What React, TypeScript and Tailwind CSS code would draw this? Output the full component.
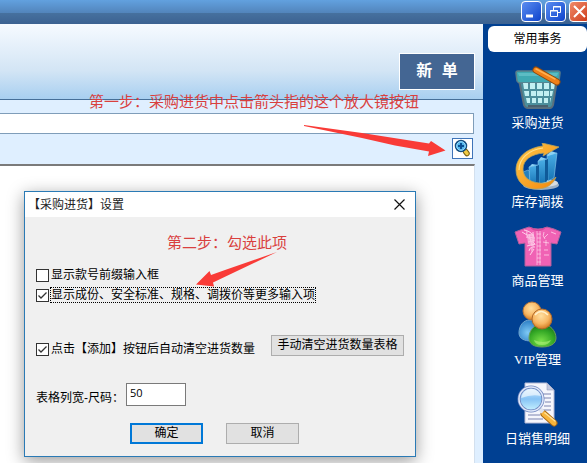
import { useState } from 'react'
import type { ReactNode } from 'react'

type NavItem = {
  label: string
  icon: ReactNode
}

type CheckOptionProps = {
  id: string
  label: string
  checked: boolean
  focused?: boolean
  onChange: (checked: boolean) => void
}

function BasketIcon() {
  return (
    <svg viewBox="0 0 48 48" className="size-12" aria-hidden="true">
      <path d="M5 16h38l-4 25q-1 3-3 3H14q-3 0-4-3Z" fill="#4c8f9c" stroke="#5a6f7c" strokeWidth="2" />
      <path d="M2 9q0-2 2-2h40q2 0 2 2l-1 8q-1 2-3 2H6q-2 0-3-2Z" fill="#3fa9b2" stroke="#5b7d8a" strokeWidth="1.5" />
      <path d="M4 9h40l-1 3H5Z" fill="#5cbcc4" />
      <g fill="#c3f0f2">
        <path d="M9 19h5v6h-4zM16 19h5v6h-5zM23 19h5v6h-5zM30 19h5v6h-5zM37 19h4l-1 6h-3z" />
        <path d="M10 27h5v5h-4zM17 27h5v5h-5zM23 27h6v5h-6zM30 27h5v5h-5zM36 27h3l-1 5h-2z" />
        <path d="M12 34h4v5h-3zM18 34h4v5h-4zM24 34h4v5h-4zM30 34h4v5h-4zM36 34h1l-1 5z" />
      </g>
      <path d="M14 42h20" stroke="#48616e" strokeWidth="2" />
      <path d="M22 6 43 18" stroke="#8a4a12" strokeWidth="7" strokeLinecap="round" />
      <path d="M22 6 43 18" stroke="#f08018" strokeWidth="5" strokeLinecap="round" />
      <path d="M22 5 41 15" stroke="#ffb050" strokeWidth="1.5" strokeLinecap="round" />
    </svg>
  )
}

function ChartIcon() {
  return (
    <svg viewBox="0 0 48 48" className="size-12" aria-hidden="true">
      <defs>
        <linearGradient id="swoosh" x1="0" y1="0" x2="1" y2="1">
          <stop offset="0" stopColor="#ffc94a" />
          <stop offset="1" stopColor="#f2860c" />
        </linearGradient>
        <linearGradient id="bar" x1="0" y1="0" x2="0" y2="1">
          <stop offset="0" stopColor="#4aaee6" />
          <stop offset="1" stopColor="#1673b4" />
        </linearGradient>
      </defs>
      <ellipse cx="27" cy="42" rx="18" ry="5" fill="#9db0c6" />
      <ellipse cx="29" cy="40" rx="15" ry="4" fill="#d8dde2" />
      <path d="M9 29l5-2 4 4v10l-5-2Z" fill="#2680bd" stroke="#7fc0e8" strokeWidth=".6" />
      <path d="M15 24l9-2v19l-8 1Z" fill="url(#bar)" stroke="#8fcdf0" strokeWidth=".6" />
      <path d="M24 18l9-2v23l-8 2Z" fill="url(#bar)" stroke="#8fcdf0" strokeWidth=".6" />
      <path d="M33 12l10-2-3 25-6 3Z" fill="url(#bar)" stroke="#8fcdf0" strokeWidth=".6" />
      <path d="M22 23v18l3-1V22ZM31 17v22l3-2V16Z" fill="#0f5a99" />
      <path d="M33 12l4-4 6 2-9 3ZM24 18l3-4 6 2ZM15 24l3-3 6 1Z" fill="#8bd2f5" />
      <path
        d="M45 4 28 0l1 3C12 5 2 15 2 27c0 11 8 19 20 19 10 0 17-4 20-12-5 5-11 7-17 6C15 39 9 34 9 26c0-9 8-15 21-16l-1 3Z"
        fill="url(#swoosh)"
        stroke="#b7a35c"
        strokeWidth=".8"
      />
      <path d="M29 5C14 7 5 16 5 27" fill="none" stroke="#ffe08a" strokeWidth="1.2" />
    </svg>
  )
}

function ShirtIcon() {
  return (
    <svg viewBox="0 0 48 48" className="size-12" aria-hidden="true">
      <path
        d="M15 5q9 4 18 0l7 2 7 3-4 12-6-1v23H11V21l-6 1L1 10l8-3Z"
        fill="#f062b4"
        stroke="#b0609c"
        strokeWidth="1"
      />
      <path d="M16 5q8 5 16 0-2 4-8 4t-8-4Z" fill="#d94b9e" />
      <g fill="none" stroke="#ffd0ea" strokeWidth="1">
        <path d="M10 8q7 1 10 7M8 10l5 3 7 0M13 9q-2 8 8 10M12 15l9 1M14 20q6-2 7 3M13 24l8-2M15 29q1-5 6-4M16 33l4-6M15 12l3 12M19 10v14" />
        <path d="M23 9v34M26 9v34M23 12h4M23 16h4M23 20h4M23 24h4M23 28h4M23 32h4M23 36h4M23 40h4" strokeWidth=".7" />
        <path d="M30 10q-2 4 1 7M34 12l-4 4M29 20l6 1M32 18v6M37 10l5 2M30 28h4M30 33h5" strokeWidth=".8" />
      </g>
      <path d="M13 14l5-3 3 6-3 7-4-2ZM16 26l4-2-2 7Z" fill="#fbb9de" opacity=".7" />
    </svg>
  )
}

function PeopleIcon() {
  return (
    <svg viewBox="0 0 48 48" className="size-12" aria-hidden="true">
      <defs>
        <radialGradient id="head" cx=".45" cy=".35" r=".65">
          <stop offset="0" stopColor="#ffdfa0" />
          <stop offset=".6" stopColor="#f8b763" />
          <stop offset="1" stopColor="#d27a22" />
        </radialGradient>
        <radialGradient id="green" cx=".45" cy=".75" r=".75">
          <stop offset="0" stopColor="#7be04a" />
          <stop offset=".6" stopColor="#35a926" />
          <stop offset="1" stopColor="#16751a" />
        </radialGradient>
        <radialGradient id="blue" cx=".4" cy=".6" r=".7">
          <stop offset="0" stopColor="#7fcaf5" />
          <stop offset="1" stopColor="#1c70bd" />
        </radialGradient>
      </defs>
      <path d="M16 19c7 0 11 6 11 13 0 5-4 8-10 8S5 38 5 32c0-7 4-13 11-13Z" fill="url(#blue)" stroke="#73a7cf" strokeWidth="1" />
      <circle cx="18" cy="10" r="9" fill="url(#head)" stroke="#b9783a" strokeWidth="1" />
      <path d="M28 23c8 0 14 7 14 14 0 6-6 9-14 9s-13-3-13-9c0-7 5-14 13-14Z" fill="url(#green)" stroke="#6d9d58" strokeWidth="1" />
      <path d="M20 39q9 4 17 0-2 5-9 5t-8-5Z" fill="#b2f27c" opacity=".6" />
      <circle cx="28" cy="18" r="10" fill="url(#head)" stroke="#b0692b" strokeWidth="1" />
      <path d="M21 14q6-7 13 0" fill="none" stroke="#fff0cb" strokeWidth="1.5" />
    </svg>
  )
}

function ReportIcon() {
  return (
    <svg viewBox="0 0 48 48" className="size-12" aria-hidden="true">
      <defs>
        <linearGradient id="lens" x1="0" y1="0" x2="0" y2="1">
          <stop offset="0" stopColor="#d9eeff" />
          <stop offset=".5" stopColor="#86c3f5" />
          <stop offset="1" stopColor="#c9f3ff" />
        </linearGradient>
      </defs>
      <path d="M11 3h22l7 7v33H11Z" fill="#f5f6fc" stroke="#b5bad6" strokeWidth="1" />
      <path d="M33 3v7h7Z" fill="#c4c9df" stroke="#9aa1c0" strokeWidth=".6" />
      <path d="M29 14h8M30 18h7M31 22h6M30 26h7M29 30h8M14 35h12M14 39h15" stroke="#a4abc9" strokeWidth="1.5" />
      <path d="M30 34 40 43" stroke="#a86a18" strokeWidth="7" strokeLinecap="round" />
      <path d="M30 34 40 43" stroke="#f8b53c" strokeWidth="5" strokeLinecap="round" />
      <path d="M31 33 41 41" stroke="#ffe39a" strokeWidth="1.5" strokeLinecap="round" />
      <path d="M25 28l4 4" stroke="#dde2ee" strokeWidth="4" />
      <circle cx="17" cy="19" r="12" fill="url(#lens)" stroke="#6f86bf" strokeWidth="3" />
      <circle cx="17" cy="19" r="12" fill="none" stroke="#dfe8fa" strokeWidth="1.5" />
      <path d="M7 18q2-9 11-9 7 1 9 7-9-2-20 2Z" fill="#fff" opacity=".6" />
    </svg>
  )
}

function ZoomInIcon() {
  return (
    <svg viewBox="0 0 19 19" className="size-[19px]" aria-hidden="true">
      <path d="M12.500 12.500l1.500 2" stroke="#7b6210" strokeWidth="5.500" strokeLinecap="round" />
      <path d="M12.500 12.500l1.500 2" stroke="#f2cc45" strokeWidth="3.500" strokeLinecap="round" />
      <circle cx="8" cy="7" r="5.500" fill="#4fb4ea" stroke="#164f80" strokeWidth="1.5" />
      <circle cx="8" cy="7" r="4.300" fill="none" stroke="#9bdcff" strokeWidth="1" />
      <path d="M8 4v6M5 7h6" stroke="#0b5194" strokeWidth="2" />
    </svg>
  )
}

const NAV_ITEMS: NavItem[] = [
  { label: '采购进货', icon: <BasketIcon /> },
  { label: '库存调拨', icon: <ChartIcon /> },
  { label: '商品管理', icon: <ShirtIcon /> },
  { label: 'VIP管理', icon: <PeopleIcon /> },
  { label: '日销售明细', icon: <ReportIcon /> },
]

function TitleBar() {
  return (
    <header className="h-6 shrink-0 bg-[linear-gradient(to_bottom,#62a1df_0px,#5284bb_13px,#46719f_13px,#3c6191_24px)]">
      <div className="-mr-[3px] flex justify-end gap-[3px] pt-px">
        <button type="button" aria-label="最小化" className="size-[21px] rounded-sm border border-white bg-linear-to-br from-[#5c8df0] to-[#0c41cc]">
          <svg viewBox="0 0 19 19" className="size-[19px]"><path d="M4 14h7" stroke="#fff" strokeWidth="3" /></svg>
        </button>
        <button type="button" aria-label="还原" className="size-[21px] rounded-sm border border-white bg-linear-to-br from-[#5c8df0] to-[#0c41cc]">
          <svg viewBox="0 0 19 19" className="size-[19px]" fill="none" stroke="#fff"><path d="M7.500 8V4.500h7v6H12M7 5h8" /><path d="M4.500 8.500h7v6h-7zM4 9h8" /></svg>
        </button>
        <button type="button" aria-label="关闭" className="size-[21px] rounded-sm border border-white bg-linear-to-br from-[#f08a68] to-[#cc3510]">
          <svg viewBox="0 0 19 19" className="size-[19px]"><path d="M4 4l11 11M15 4 4 15" stroke="#fff" strokeWidth="2" /></svg>
        </button>
      </div>
    </header>
  )
}

function Sidebar() {
  return (
    <aside className="w-[104px] shrink-0 bg-[#004092] pt-0.5 pl-[5px]">
      <h2 className="h-[26px] rounded-md bg-white text-center text-xs leading-[26px] text-black">常用事务</h2>
      <nav className="mt-3 flex flex-col gap-[9px]">
        {NAV_ITEMS.map((item) => (
          <a key={item.label} href="#" className="flex flex-col items-center text-[13px] leading-[22px] text-white">
            {item.icon}
            <span className="font-['Liberation_Serif','Noto_Sans_CJK_SC',sans-serif]">{item.label}</span>
          </a>
        ))}
      </nav>
    </aside>
  )
}

function CheckOption({ id, label, checked, focused, onChange }: CheckOptionProps) {
  return (
    <div className="flex items-center gap-px">
      <span className="grid">
        <input
          id={id}
          type="checkbox"
          checked={checked}
          onChange={(e) => onChange(e.target.checked)}
          className="col-start-1 row-start-1 size-[13px] appearance-none border border-[#333] bg-white"
        />
        {checked && (
          <svg viewBox="0 0 13 13" className="pointer-events-none col-start-1 row-start-1 size-[13px]" fill="none" stroke="#333" strokeWidth="1.3">
            <path d="M2.500 6.500 5 9l5.500-5.500" />
          </svg>
        )}
      </span>
      <label
        htmlFor={id}
        className={`h-4 border border-dotted text-xs leading-[14px] whitespace-nowrap ${focused ? 'border-black' : 'border-transparent'}`}
      >
        {label}
      </label>
    </div>
  )
}

function SettingsDialog() {
  const [showPrefix, setShowPrefix] = useState(false)
  const [showMore, setShowMore] = useState(true)
  const [autoClear, setAutoClear] = useState(true)
  const [columnWidth, setColumnWidth] = useState('50')

  return (
    <section
      role="dialog"
      aria-labelledby="dialog-title"
      className="absolute top-[167px] left-6 w-[392px] border border-[#2a7ab5] bg-[#f0f0f0] text-xs text-black shadow-[0_4px_16px_rgba(0,0,0,0.4)]"
    >
      <div className="flex h-[25px] items-center justify-between bg-white pr-2.5 pl-[3px]">
        <h1 id="dialog-title" className="text-[#222]">【采购进货】设置</h1>
        <button type="button" aria-label="关闭">
          <svg viewBox="0 0 11 11" className="size-[11px]"><path d="M.5.5l10 10M10.500.5l-10 10" stroke="#111" strokeWidth="1.2" /></svg>
        </button>
      </div>
      <form className="px-[11px] pb-3" onSubmit={(e) => e.preventDefault()}>
        <p className="pt-4 pl-3.5 text-center text-[15px] leading-5 text-[#d9403e]">第二步：勾选此项</p>
        <div className="mt-3.5 flex flex-col gap-1">
          <CheckOption id="show-prefix" label="显示款号前缀输入框" checked={showPrefix} onChange={setShowPrefix} />
          <CheckOption id="show-more" label="显示成份、安全标准、规格、调拨价等更多输入项" checked={showMore} onChange={setShowMore} focused />
        </div>
        <div className="mt-8 flex items-start justify-between">
          <div className="pt-1.5">
            <CheckOption id="auto-clear" label="点击【添加】按钮后自动清空进货数量" checked={autoClear} onChange={setAutoClear} />
          </div>
          <button type="button" className="h-[21px] w-[133px] border border-[#adadad] bg-[#e1e1e1] leading-[19px]">
            手动清空进货数量表格
          </button>
        </div>
        <div className="mt-[26px] flex items-start">
          <label htmlFor="column-width" className="w-[90px] pt-[7px] leading-4 whitespace-nowrap">表格列宽-尺码：</label>
          <input
            id="column-width"
            type="text"
            value={columnWidth}
            onChange={(e) => setColumnWidth(e.target.value)}
            className="h-[23px] w-[60px] border border-[#7a7a7a] bg-white px-[3px] pb-1 font-['Open_Sans',sans-serif] text-[11px] leading-4"
          />
        </div>
        <div className="mt-[17px] flex gap-[23px] pl-[94px]">
          <button type="submit" className="h-[21px] w-[73px] border-2 border-[#0078d7] bg-[#e1e1e1] leading-[17px]">确定</button>
          <button type="button" className="h-[21px] w-[73px] border border-[#adadad] bg-[#e1e1e1] leading-[19px]">取消</button>
        </div>
      </form>
    </section>
  )
}

// Red guide arrows drawn over the window, in the main panel's coordinates
function GuideArrows() {
  return (
    <svg width="483" height="300" className="pointer-events-none absolute top-0 left-0" fill="#f93b37" aria-hidden="true">
      <path d="M304 101 L362 109 L429 119.500 L431 117 L445.500 126.500 L428 132 L429 127.500 L395 121.500 L362 114 L304 102Z" />
      <path d="M277 228 L225 246 L211 251 L209.500 247 L196 260.500 L214 262.500 L213 258.500 L235 248Z" />
    </svg>
  )
}

export default function App() {
  return (
    <div className="flex min-h-screen flex-col overflow-hidden bg-white font-['Liberation_Sans','Noto_Sans_CJK_SC',sans-serif]">
      <TitleBar />
      <div className="flex flex-1">
        <main className="relative flex min-w-0 flex-1 flex-col bg-[#dfefff]">
          <div className="flex h-19 items-end justify-end border-b border-[#466f98] bg-[linear-gradient(to_bottom,#f6faff,#d3e5f5_62%,#a8cff0)] pr-2 pb-[9px]">
            <button
              type="button"
              className="h-[37px] w-[76px] border border-white bg-[#446693] font-['Liberation_Mono','Noto_Sans_CJK_SC',monospace] text-base font-bold text-white"
            >
              新 单
            </button>
          </div>
          <div className="pt-[13px] pr-[9px]">
            <input type="text" aria-label="款号" className="block h-[21px] w-full border border-l-0 border-[#7f9db9] bg-white px-2 text-xs" />
          </div>
          <div className="flex justify-end pt-1 pr-2.5 pb-[5px]">
            <button type="button" aria-label="放大镜" className="size-[21px] border border-[#3f74b8] bg-white">
              <ZoomInIcon />
            </button>
          </div>
          <div className="mr-2 flex-1 border-t-2 border-r border-t-[#7a7a7a] border-r-[#d3e0ee] bg-white" />

          <p className="absolute top-[68px] left-[89px] text-[15px] leading-5 whitespace-nowrap text-[#d9403e]">
            第一步：采购进货中点击箭头指的这个放大镜按钮
          </p>
          <SettingsDialog />
          <GuideArrows />
        </main>
        <Sidebar />
      </div>
    </div>
  )
}
